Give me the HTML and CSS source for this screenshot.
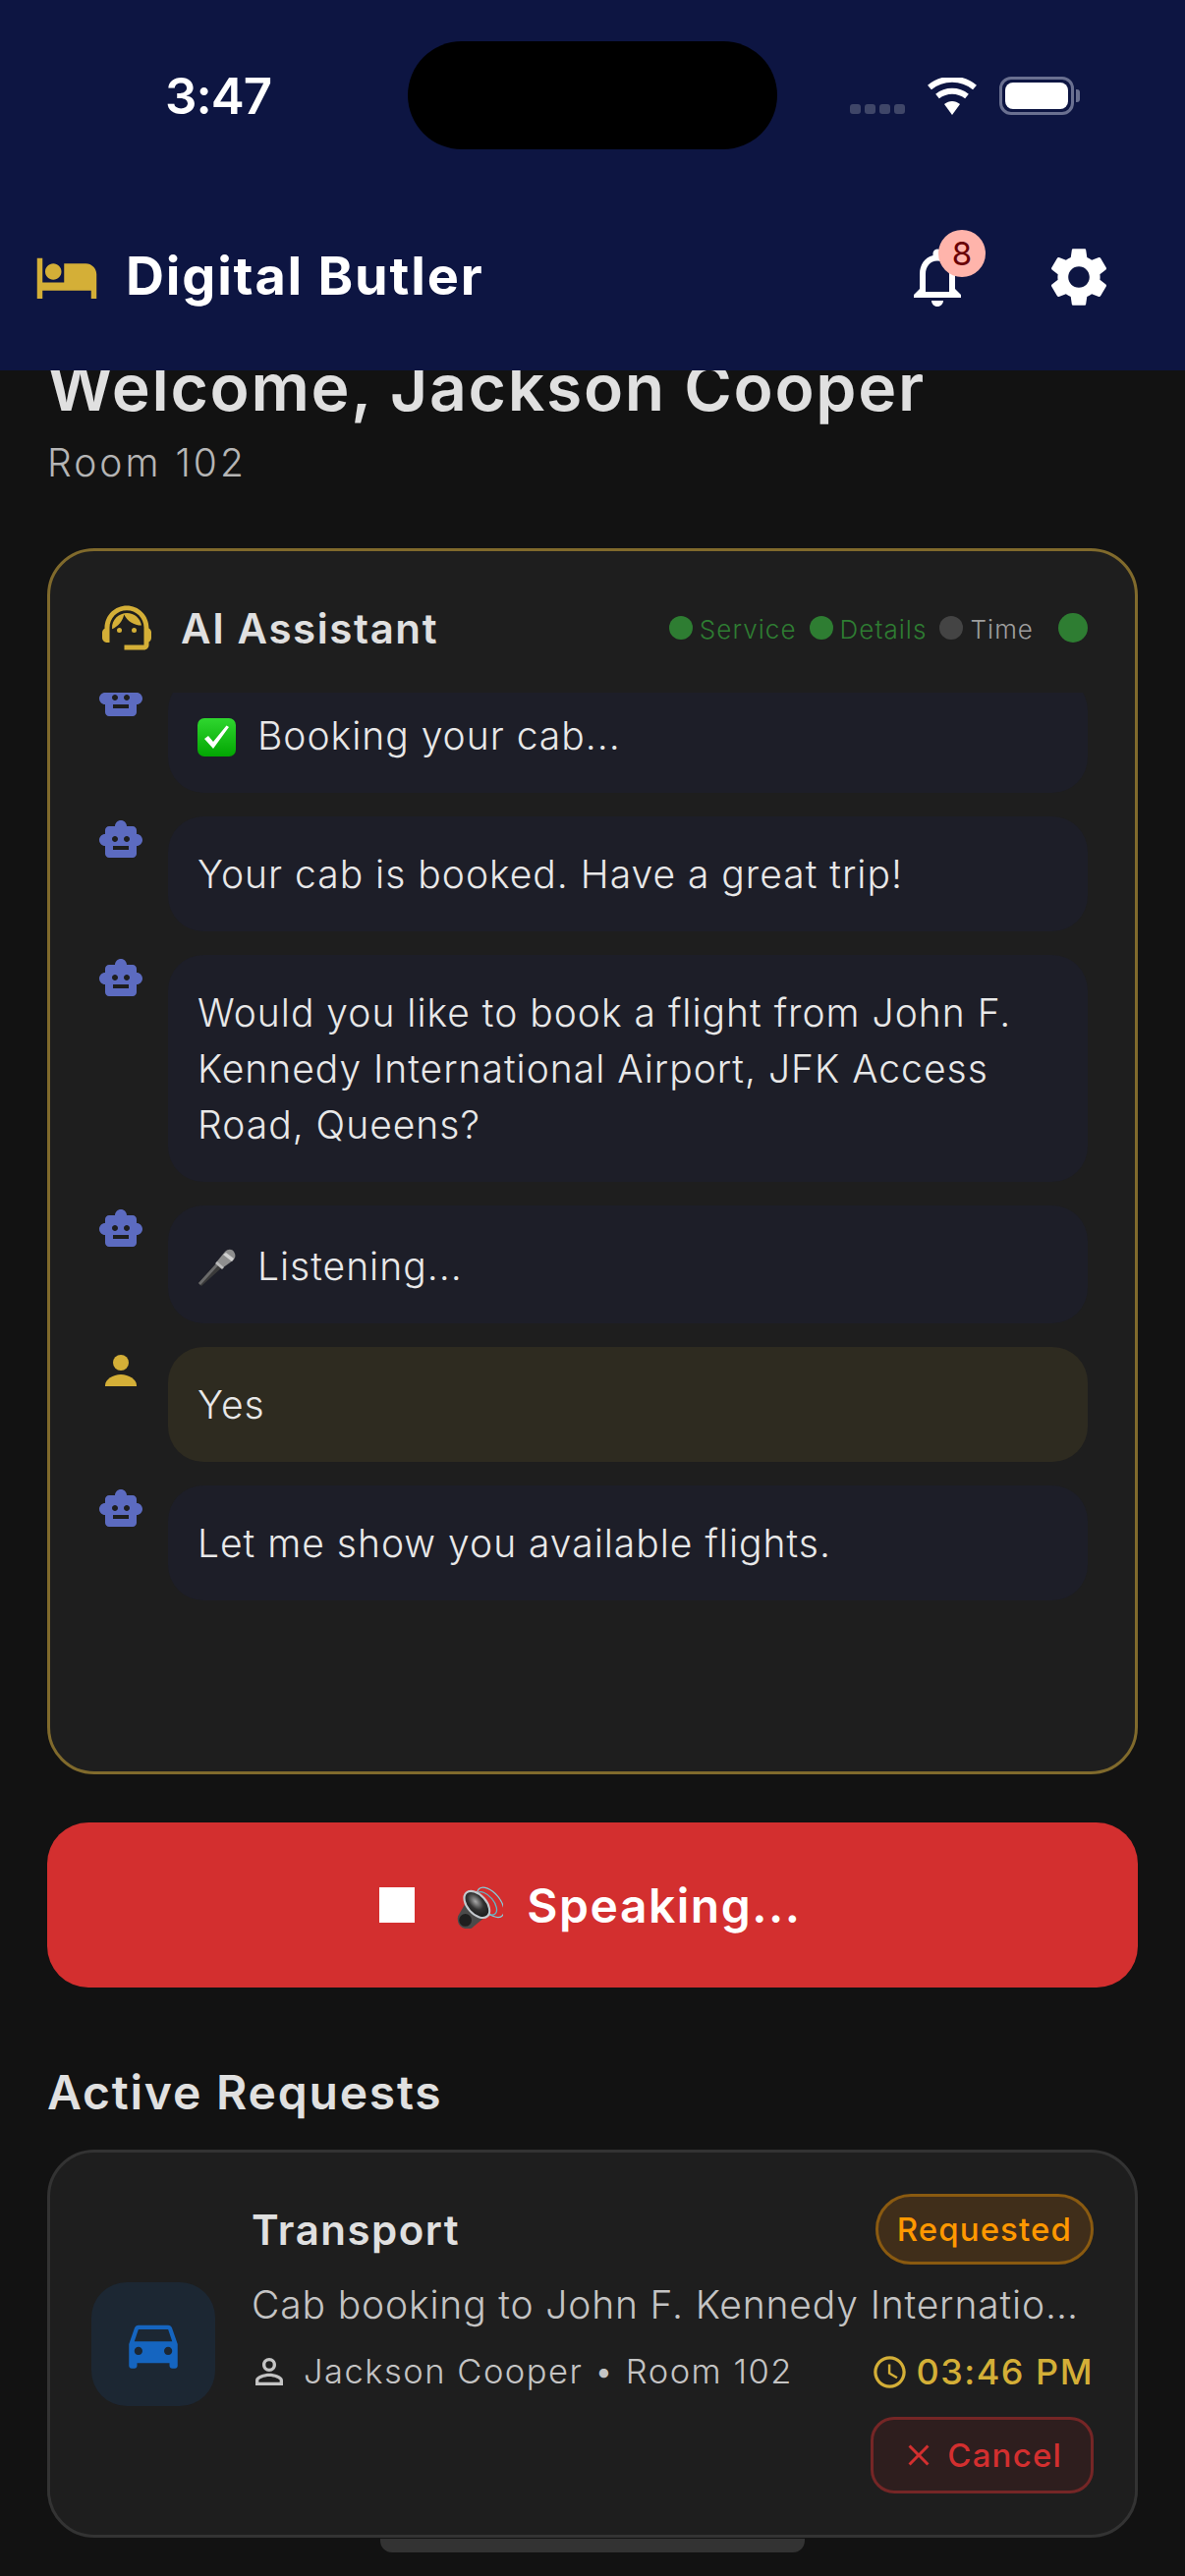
FILE: index.html
```html
<!DOCTYPE html>
<html lang="en">
<head>
  <meta charset="UTF-8">
  <title>Digital Butler</title>
  <link rel="stylesheet" href="styles.css">
</head>
<body>
<svg class="defs" width="0" height="0">
  <defs>
    <symbol id="robot" viewBox="0 0 24 24"><path d="M20 9V7c0-1.1-.9-2-2-2h-3c0-1.66-1.34-3-3-3S9 3.34 9 5H6c-1.1 0-2 .9-2 2v2c-1.66 0-3 1.34-3 3s1.34 3 3 3v4c0 1.1.9 2 2 2h12c1.1 0 2-.9 2-2v-4c1.66 0 3-1.34 3-3s-1.34-3-3-3zM7.5 11.5C7.5 10.67 8.17 10 9 10s1.5.67 1.5 1.5S9.83 13 9 13s-1.5-.67-1.5-1.5zM16 17H8v-2h8v2zm-1-4c-.83 0-1.5-.67-1.5-1.5S14.17 10 15 10s1.5.67 1.5 1.5S15.83 13 15 13z"/></symbol>
  </defs>
</svg>
<div class="phone">
  <header class="top">
    <div class="status">
      <span class="clock">3:47</span>
      <div class="island"></div>
      <div class="status-icons">
        <div class="signal"><i></i><i></i><i></i><i></i></div>
        <svg class="wifi" width="50" height="38" viewBox="0 0 50 38"><path d="M25 38 17 27c5-4 11-4 16 0z" fill="#fff"/><path d="M10 19c9-7 21-7 30 0" fill="none" stroke="#fff" stroke-width="6"/><path d="M2 10c13-11 33-11 46 0" fill="none" stroke="#fff" stroke-width="6"/></svg>
        <div class="battery"><div class="battery-fill"></div></div>
      </div>
    </div>
    <div class="appbar">
      <svg class="bed" width="66" height="66" viewBox="0 0 24 24"><path d="M7 13c1.66 0 3-1.34 3-3S8.66 7 7 7s-3 1.34-3 3 1.34 3 3 3zm12-6h-8v7H3V5H1v15h2v-3h18v3h2v-9c0-2.21-1.79-4-4-4z"/></svg>
      <h1 class="brand">Digital Butler</h1>
      <div class="bell">
        <svg width="72" height="72" viewBox="0 0 24 24"><path d="M12 22c1.1 0 2-.9 2-2h-4c0 1.1.9 2 2 2zm6-6v-5c0-3.07-1.63-5.64-4.5-6.32V4c0-.83-.67-1.5-1.5-1.5s-1.5.67-1.5 1.5v.68C7.64 5.36 6 7.92 6 11v5l-2 2v1h16v-1l-2-2zm-2 1H8v-6c0-2.48 1.51-4.5 4-4.5s4 2.02 4 4.5v6z"/></svg>
        <span class="badge">8</span>
      </div>
      <svg class="gear" width="72" height="72" viewBox="0 0 24 24"><path d="M19.14 12.94c.04-.3.06-.61.06-.94 0-.32-.02-.64-.07-.94l2.03-1.58c.18-.14.23-.41.12-.61l-1.92-3.32c-.12-.22-.37-.29-.59-.22l-2.39.96c-.5-.38-1.03-.7-1.62-.94l-.36-2.54c-.04-.24-.24-.41-.48-.41h-3.84c-.24 0-.43.17-.47.41l-.36 2.54c-.59.24-1.13.57-1.62.94l-2.39-.96c-.22-.08-.47 0-.59.22L2.74 8.87c-.12.21-.08.47.12.61l2.03 1.58c-.05.3-.09.63-.09.94s.02.64.07.94l-2.03 1.58c-.18.14-.23.41-.12.61l1.92 3.32c.12.22.37.29.59.22l2.39-.96c.5.38 1.03.7 1.62.94l.36 2.54c.05.24.24.41.48.41h3.84c.24 0 .44-.17.47-.41l.36-2.54c.59-.24 1.13-.56 1.62-.94l2.39.96c.22.08.47 0 .59-.22l1.92-3.32c.12-.22.07-.47-.12-.61l-2.01-1.58zM12 15.6c-1.98 0-3.6-1.62-3.6-3.6s1.62-3.6 3.6-3.6 3.6 1.62 3.6 3.6-1.62 3.6-3.6 3.6z"/></svg>
    </div>
  </header>

  <main class="content">
    <h2 class="welcome">Welcome, Jackson Cooper</h2>
    <p class="room">Room 102</p>

    <section class="assistant">
      <div class="assistant-head">
        <svg class="agent" width="60" height="60" viewBox="0 0 24 24"><path d="M21 12.22C21 6.73 16.74 3 12 3c-4.69 0-9 3.65-9 9.28-.6.34-1 .98-1 1.72v2c0 1.1.9 2 2 2h1v-6.1c0-3.87 3.13-7 7-7s7 3.13 7 7V19h-8v2h8c1.1 0 2-.9 2-2v-1.22c.59-.31 1-.92 1-1.64v-2.3c0-.7-.41-1.31-1-1.62z"/><circle cx="9" cy="13" r="1"/><circle cx="15" cy="13" r="1"/><path d="M18 11.03C17.52 8.18 15.04 6 12.05 6c-3.03 0-6.29 2.51-6.03 6.45 2.47-1.01 4.33-3.21 4.86-5.89 1.31 2.63 4 4.44 7.12 4.47z"/></svg>
        <h3 class="assistant-title">AI Assistant</h3>
        <div class="steps">
          <span class="dot on"></span><span class="step on">Service</span>
          <span class="dot on"></span><span class="step on">Details</span>
          <span class="dot"></span><span class="step">Time</span>
        </div>
        <span class="live"></span>
      </div>

      <div class="chat">
        <div class="chat-list">
          <div class="msg">
            <svg class="avatar bot" viewBox="0 0 24 24"><use href="#robot"/></svg>
            <div class="bubble tall">
              <svg class="emoji" viewBox="0 0 39 39"><defs><linearGradient id="chk" x1="0" y1="0" x2="0" y2="1"><stop offset="0" stop-color="#2fd62f"/><stop offset="1" stop-color="#02a602"/></linearGradient></defs><rect width="39" height="39" rx="7" fill="url(#chk)"/><path d="M7 21l9 10L32 9l-2.500-1.500L16 24l-5-6z" fill="#fff"/></svg>Booking your cab...
            </div>
          </div>
          <div class="msg">
            <svg class="avatar bot" viewBox="0 0 24 24"><use href="#robot"/></svg>
            <div class="bubble">Your cab is booked. Have a great trip!</div>
          </div>
          <div class="msg">
            <svg class="avatar bot" viewBox="0 0 24 24"><use href="#robot"/></svg>
            <div class="bubble">Would you like to book a flight from John F. Kennedy International Airport, JFK Access Road, Queens?</div>
          </div>
          <div class="msg">
            <svg class="avatar bot" viewBox="0 0 24 24"><use href="#robot"/></svg>
            <div class="bubble tall">
              <svg class="emoji" viewBox="0 0 39 39"><path d="M1 35 20 14l5 5L4 38z" fill="#3a3a3a"/><path d="M1 35 20 14l2 2L3 37z" fill="#6a6a6a"/><path d="M19 14 28 3c3-3 7-3 9 0s2 6-1 9L25 20z" fill="#8e8e8e"/><path d="M26 6l9 7 2-3-8-6z" fill="#d0d0d0"/><path d="M18 15l7 6 2-2-7-6z" fill="#bbb"/></svg>Listening...
            </div>
          </div>
          <div class="msg">
            <svg class="avatar user" viewBox="0 0 24 24"><circle cx="12" cy="8" r="4"/><path d="M4 20v-.5C4 16.500 8 14 12 14s8 2.500 8 5.500v.5z"/></svg>
            <div class="bubble mine">Yes</div>
          </div>
          <div class="msg">
            <svg class="avatar bot" viewBox="0 0 24 24"><use href="#robot"/></svg>
            <div class="bubble">Let me show you available flights.</div>
          </div>
        </div>
      </div>
    </section>

    <button class="speak">
      <svg class="stop" width="72" height="72" viewBox="0 0 24 24"><path d="M6 6h12v12H6z"/></svg>
      <svg class="speaker" width="48" height="48" viewBox="1 0 45 45"><defs><radialGradient id="cone" cx=".55" cy=".4" r=".7"><stop offset="0" stop-color="#a8a8a8"/><stop offset=".45" stop-color="#333"/><stop offset="1" stop-color="#111"/></radialGradient></defs><ellipse cx="34" cy="20" rx="9" ry="17" transform="rotate(-40 34 20)" fill="none" stroke="#86ccd9" stroke-width="1.200"/><ellipse cx="30" cy="21" rx="7" ry="13" transform="rotate(-40 30 21)" fill="none" stroke="#62b8c9" stroke-width="1.200"/><path d="M3 33c-1 4 0 9 4 11s9 2 11-1L30 33 13 16z" fill="#4a4a4a"/><ellipse cx="21" cy="22" rx="9" ry="15" transform="rotate(-42 21 22)" fill="url(#cone)" stroke="#c4c9ce" stroke-width="2"/><circle cx="10" cy="37" r="6" fill="#1f1f1f"/></svg>
      <span class="speak-label">Speaking...</span>
    </button>

    <h3 class="section-title">Active Requests</h3>

    <article class="request">
      <div class="request-icon">
        <svg width="66" height="66" viewBox="0 0 24 24"><path d="M18.92 6.010C18.72 5.420 18.160 5 17.500 5h-11c-.66 0-1.210.42-1.420 1.010L3 12v8c0 .55.45 1 1 1h1c.55 0 1-.45 1-1v-1h12v1c0 .55.45 1 1 1h1c.55 0 1-.45 1-1v-8l-2.080-5.990zM6.500 16c-.83 0-1.500-.67-1.500-1.500S5.670 13 6.500 13s1.500.67 1.500 1.500S7.330 16 6.500 16zm11 0c-.83 0-1.500-.67-1.500-1.500s.67-1.500 1.500-1.500 1.500.67 1.500 1.500-.67 1.500-1.500 1.500zM5 11l1.500-4.500h11L19 11H5z"/></svg>
      </div>
      <div class="request-body">
        <div class="request-top">
          <h4 class="request-title">Transport</h4>
          <span class="pill">Requested</span>
        </div>
        <p class="request-desc">Cab booking to John F. Kennedy International Airport</p>
        <div class="request-meta">
          <div class="guest">
            <svg width="42" height="42" viewBox="0 0 24 24"><path d="M12 5.900a2.100 2.100 0 1 1 0 4.200 2.100 2.100 0 0 1 0-4.200m0 9c2.970 0 6.100 1.460 6.100 2.100v1.100H5.900V17c0-.64 3.130-2.100 6.100-2.100M12 4C9.790 4 8 5.790 8 8s1.790 4 4 4 4-1.790 4-4-1.790-4-4-4zm0 9c-2.670 0-8 1.340-8 4v3h16v-3c0-2.660-5.330-4-8-4z"/></svg>
            <span>Jackson Cooper • Room 102</span>
          </div>
          <div class="when">
            <svg width="39" height="39" viewBox="0 0 24 24"><path d="M11.990 2C6.470 2 2 6.480 2 12s4.470 10 9.990 10C17.520 22 22 17.520 22 12S17.520 2 11.990 2zM12 20c-4.420 0-8-3.580-8-8s3.580-8 8-8 8 3.580 8 8-3.580 8-8 8zm.5-13H11v6l5.250 3.150.75-1.230-4.500-2.670z"/></svg>
            <span>03:46 PM</span>
          </div>
        </div>
        <div class="request-actions">
          <button class="cancel">
            <svg width="36" height="36" viewBox="0 0 24 24"><path d="M19 6.410 17.590 5 12 10.590 6.410 5 5 6.410 10.590 12 5 17.590 6.410 19 12 13.410 17.590 19 19 17.590 13.410 12z"/></svg>
            Cancel
          </button>
        </div>
      </div>
    </article>
  </main>

  <div class="home-bar"></div>
</div>
</body>
</html>
```

FILE: styles.css
```css
* {
  box-sizing: border-box;
}
body {
  margin: 0;
  background: #121212;
  font-family: Inter, "Noto Sans", sans-serif;
  color: #e0e0e0;
}
h1, h2, h3, h4, p {
  margin: 0;
}
button {
  font-family: inherit;
  cursor: pointer;
}
.defs {
  position: absolute;
}
.phone {
  position: relative;
  width: 1206px;
  height: 2622px;
  overflow: hidden;
  display: flex;
  flex-direction: column;
}

/* top bar */
.top {
  height: 377px;
  flex: none;
  background: #0d1542;
  position: relative;
  z-index: 1;
}
.status {
  height: 222px;
  padding: 68px 113px 0 168px;
  display: flex;
  justify-content: space-between;
  align-items: flex-start;
}
.clock {
  font-size: 51px;
  font-weight: 600;
  line-height: 60px;
  letter-spacing: -1px;
  color: #fff;
}
.island {
  position: absolute;
  left: 415px;
  top: 42px;
  width: 376px;
  height: 110px;
  border-radius: 55px;
  background: #000;
}
.status-icons {
  margin-top: 10px;
  display: flex;
  align-items: flex-end;
  gap: 23px;
}
.signal {
  display: flex;
  gap: 4px;
  margin-bottom: 1px;
}
.signal i {
  width: 11px;
  height: 10px;
  border-radius: 3px;
  background: #3f4668;
}
.battery {
  position: relative;
  width: 76px;
  height: 39px;
  border: 3px solid #6a7090;
  border-radius: 12px;
  padding: 3px;
}
.battery::after {
  content: "";
  position: absolute;
  right: -9px;
  top: 10px;
  width: 4px;
  height: 13px;
  border-radius: 0 3px 3px 0;
  background: #6a7090;
}
.battery-fill {
  height: 100%;
  background: #fff;
  border-radius: 8px;
}
.appbar {
  display: flex;
  align-items: center;
  padding: 0 72px 0 35px;
  height: 120px;
}
.bed {
  fill: #d4af37;
}
.brand {
  flex: 1;
  margin-left: 27px;
  padding-bottom: 3px;
  font-size: 54px;
  font-weight: 700;
  letter-spacing: 1.8px;
  color: #fff;
}
.bell {
  position: relative;
  width: 72px;
  height: 72px;
  margin-right: 72px;
  fill: #fff;
}
.badge {
  position: absolute;
  left: 37px;
  top: -12px;
  width: 48px;
  height: 48px;
  border-radius: 50%;
  background: #ffb4ab;
  color: #690005;
  font-size: 33px;
  line-height: 48px;
  text-align: center;
}
.gear {
  fill: #fff;
}

/* page content */
.content {
  flex: 1;
  min-height: 0;
  padding: 0 48px;
}
.welcome {
  margin-top: -19px;
  font-size: 66px;
  line-height: 72px;
  font-weight: 600;
  letter-spacing: 1.7px;
}
.room {
  margin-top: 17px;
  font-size: 39px;
  line-height: 48px;
  font-weight: 300;
  letter-spacing: 3px;
  color: #b5b5b5;
}
.assistant {
  margin-top: 63px;
  height: 1248px;
  padding: 48px;
  background: #1e1e1e;
  border: 3px solid #806a2c;
  border-radius: 48px;
  display: flex;
  flex-direction: column;
}
.assistant-head {
  height: 60px;
  flex: none;
  display: flex;
  align-items: center;
}
.agent {
  fill: #d4af37;
}
.assistant-title {
  flex: 1;
  margin-left: 25px;
  font-size: 42px;
  font-weight: 600;
  letter-spacing: 1.6px;
}
.steps {
  display: flex;
  align-items: center;
}
.dot {
  width: 24px;
  height: 24px;
  border-radius: 50%;
  background: #444;
  margin-right: 7px;
}
.dot.on {
  background: #2e7d32;
}
.step {
  margin-top: 3px;
  font-size: 26px;
  font-weight: 300;
  letter-spacing: 1.05px;
  margin-right: 13px;
  color: #9e9e9e;
}
.step.on {
  color: #2e7d32;
}
.live {
  width: 30px;
  height: 30px;
  margin-left: 12px;
  border-radius: 50%;
  background: #2e7d32;
}
.chat {
  flex: 1;
  min-height: 0;
  margin-top: 36px;
  overflow: hidden;
}
.chat-list {
  margin-top: -18px;
  display: flex;
  flex-direction: column;
  gap: 24px;
}
.msg {
  display: flex;
  align-items: flex-start;
  gap: 24px;
}
.avatar {
  width: 48px;
  height: 48px;
  flex: none;
}
.avatar.bot {
  fill: #5c6bc0;
}
.avatar.user {
  fill: #d4af37;
}
.bubble {
  flex: 1;
  padding: 30px;
  border-radius: 36px;
  background: #1d1e28;
  font-size: 39px;
  font-weight: 300;
  line-height: 57px;
  letter-spacing: 1px;
  color: #e8e8e8;
}
.bubble.tall {
  padding-top: 32px;
  padding-bottom: 28px;
  line-height: 60px;
}
.bubble.mine {
  background: #2e2b20;
}
.emoji {
  width: 39px;
  height: 39px;
  margin-right: 22px;
  vertical-align: -7px;
}
.speak {
  width: 100%;
  height: 168px;
  margin-top: 49px;
  border: 0;
  border-radius: 42px;
  background: #d32f2f;
  color: #fff;
  font-size: 48px;
  font-weight: 600;
  letter-spacing: 1.5px;
  display: flex;
  align-items: center;
  justify-content: center;
}
.stop {
  fill: #fff;
  margin-right: 24px;
}
.speaker {
  margin-right: 24px;
}
.speak-label {
  margin-right: 22px;
}
.section-title {
  margin-top: 78px;
  margin-bottom: 30px;
  font-size: 48px;
  line-height: 57px;
  font-weight: 600;
  letter-spacing: 1.8px;
}

/* request card */
.request {
  height: 395px;
  padding: 42px;
  background: #1e1e1e;
  border: 3px solid #333;
  border-radius: 48px;
  display: flex;
  align-items: center;
  gap: 37px;
}
.request-icon {
  width: 126px;
  height: 126px;
  flex: none;
  border-radius: 36px;
  background: #1c2733;
  fill: #1565c0;
  display: flex;
  align-items: center;
  justify-content: center;
}
.request-body {
  flex: 1;
  min-width: 0;
  align-self: flex-start;
}
.request-top {
  display: flex;
  justify-content: space-between;
  align-items: center;
}
.request-title {
  font-size: 42px;
  font-weight: 600;
  letter-spacing: 1.5px;
}
.pill {
  height: 72px;
  padding: 0 19px;
  border: 3px solid #8a5a10;
  border-radius: 36px;
  background: #402e1a;
  color: #ff9800;
  font-size: 33px;
  font-weight: 500;
  line-height: 66px;
  letter-spacing: 1.1px;
}
.request-desc {
  margin-top: 14px;
  font-size: 39px;
  font-weight: 300;
  line-height: 54px;
  letter-spacing: 0.85px;
  color: #c4c4c4;
  white-space: nowrap;
  overflow: hidden;
  text-overflow: ellipsis;
  padding-right: 10px;
}
.request-meta {
  margin-top: 17px;
  display: flex;
  justify-content: space-between;
  align-items: center;
  line-height: 48px;
}
.guest {
  display: flex;
  align-items: center;
  gap: 14px;
  margin-left: -3px;
  fill: #c4c4c4;
  color: #c4c4c4;
  font-size: 34.500px;
  font-weight: 300;
  letter-spacing: 1.500px;
}
.when {
  display: flex;
  align-items: center;
  gap: 7px;
  fill: #d4af37;
  color: #d4af37;
  font-size: 36px;
  font-weight: 500;
  letter-spacing: 1.5px;
}
.request-actions {
  margin-top: 22px;
  display: flex;
  justify-content: flex-end;
}
.cancel {
  height: 78px;
  padding: 0 29px 0 28px;
  border: 3px solid #752626;
  border-radius: 24px;
  background: #2e1e1e;
  color: #d32f2f;
  fill: #d32f2f;
  font-size: 33px;
  font-weight: 500;
  letter-spacing: 1.2px;
  display: flex;
  align-items: center;
  gap: 11px;
}
.home-bar {
  position: absolute;
  left: 387px;
  top: 2584px;
  width: 432px;
  height: 14px;
  border-radius: 0 0 12px 12px;
  background: #333;
}
```
